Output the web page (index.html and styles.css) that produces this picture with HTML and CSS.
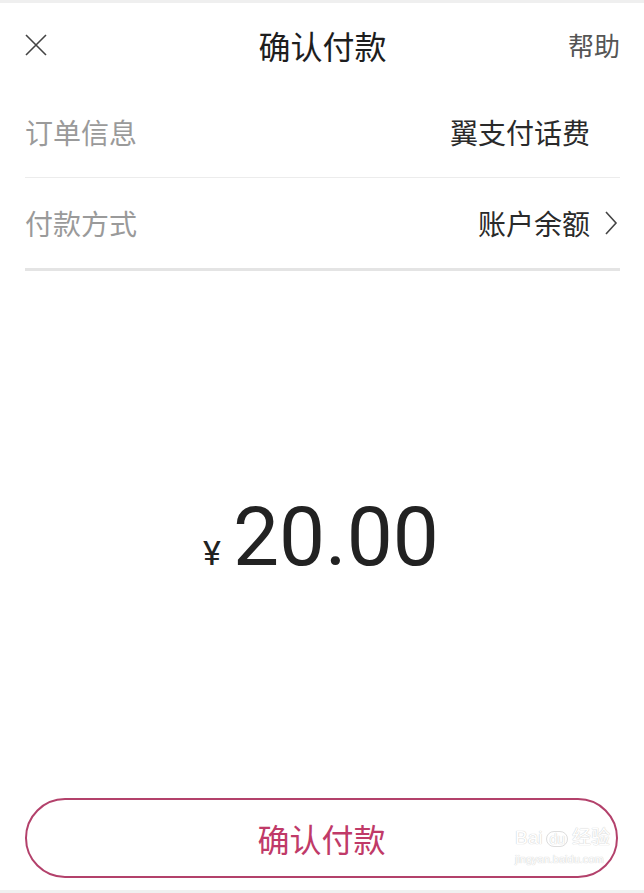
FILE: index.html
```html
<!DOCTYPE html>
<html lang="zh-CN">
<head>
<meta charset="utf-8">
<title>确认付款</title>
<link rel="stylesheet" href="styles.css">
</head>
<body>
<div class="page">
  <div class="topband"></div>
  <header class="header">
    <span class="close">
      <svg width="22" height="22" viewBox="0 0 22 22"><path d="M1 1 L21 21 M21 1 L1 21" stroke="#444" stroke-width="1.6" fill="none"/></svg>
    </span>
    <h1 class="title">确认付款</h1>
    <span class="help">帮助</span>
  </header>
  <div class="info">
    <div class="row">
      <span class="label">订单信息</span>
      <span class="value plain">翼支付话费</span>
    </div>
    <div class="divider"></div>
    <div class="row">
      <span class="label">付款方式</span>
      <span class="value">账户余额
        <svg class="chev" width="14" height="24" viewBox="0 0 14 24"><path d="M2 1 L12 12 L2 23" stroke="#444" stroke-width="1.6" fill="none"/></svg>
      </span>
    </div>
    <div class="divider thick"></div>
  </div>
  <div class="amount">
    <span class="yen">¥</span><span class="num">20.00</span>
  </div>
  <div class="btnwrap">
    <button class="confirm">确认付款</button>
    <div class="watermark">
      <div class="wm-top"><span>Bai</span><span class="wm-du">du</span><span>经验</span></div>
      <div class="wm-url">jingyan.baidu.com</div>
    </div>
  </div>
  <div class="bottomband"></div>
</div>
</body>
</html>
```
FILE: styles.css
```css
* { box-sizing: border-box; }
html, body { margin: 0; padding: 0; background: #fff; }
body {
  font-family: "Noto Sans CJK SC", "Noto Sans", sans-serif;
  width: 644px;
  height: 893px;
  overflow: hidden;
}
.page {
  display: flex;
  flex-direction: column;
  height: 893px;
}
.topband {
  height: 3px;
  background: #efefef;
}
.header {
  height: 84px;
  display: grid;
  grid-template-columns: 1fr auto 1fr;
  align-items: center;
  padding: 0 24px 0 25px;
}
.close { display: flex; align-items: center; }
.title {
  margin: 0;
  font-size: 32px;
  font-weight: 400;
  color: #1e1e1e;
  line-height: 1;
}
.help {
  justify-self: end;
  font-size: 26px;
  color: #555;
  line-height: 1;
}
.info {
  margin: 0 24px 0 25px;
}
.row {
  height: 90px;
  display: flex;
  align-items: center;
  justify-content: space-between;
}
.label {
  font-size: 28px;
  color: #9a9a9a;
  line-height: 1;
}
.value {
  font-size: 28px;
  color: #2a2a2a;
  line-height: 1;
  display: flex;
  align-items: center;
  gap: 14px;
  padding-right: 2px;
}
.value.plain {
  padding-right: 30px;
}
.chev { display: block; }
.divider {
  height: 1px;
  background: #ececec;
}
.divider.thick {
  height: 3px;
  background: #e4e4e4;
}
.amount {
  height: 527px;
  display: flex;
  align-items: baseline;
  justify-content: center;
  padding-top: 225px;
  font-family: Roboto, "Noto Sans", sans-serif;
  color: #222;
  padding-right: 2px;
}
.yen {
  font-size: 34px;
  line-height: 1;
  margin-right: 12px;
}
.num {
  font-size: 82px;
  line-height: 1;
  letter-spacing: 0;
}
.btnwrap {
  position: relative;
  margin: 0 26px 0 25px;
}
.confirm {
  width: 100%;
  height: 80px;
  border: 2px solid #b3416b;
  border-radius: 40px;
  background: #fff;
  color: #c03a68;
  font-family: "Noto Sans CJK SC", sans-serif;
  font-size: 32px;
  line-height: 1;
  padding: 0;
}
.watermark {
  position: absolute;
  right: 8px;
  top: 30px;
  color: #fff;
  text-shadow: 0 0 1px #cfcfcf, 0 0 1px #cfcfcf;
  font-family: "Liberation Sans", sans-serif;
  pointer-events: none;
}
.wm-top {
  display: flex;
  align-items: flex-end;
  gap: 4px;
  font-size: 19px;
  line-height: 1;
}
.wm-du {
  font-size: 14px;
  border: 1px solid #ddd;
  border-radius: 8px;
  padding: 0 2px;
}
.wm-url {
  font-size: 11px;
  line-height: 1.2;
  margin-top: 6px;
}
.bottomband {
  margin-top: auto;
  height: 3px;
  background: #f0f0f0;
}
```
